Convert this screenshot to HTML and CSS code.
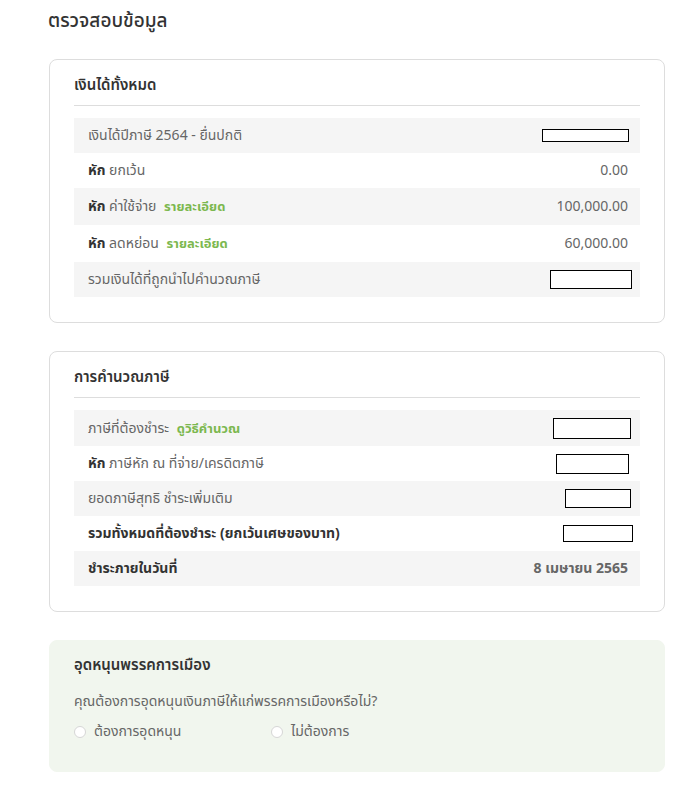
FILE: index.html
```html
<!DOCTYPE html>
<html lang="th">
<head>
<meta charset="utf-8">
<link rel="stylesheet" href="styles.css">
</head>
<body>
<div class="page">
  <h1 class="title">ตรวจสอบข้อมูล</h1>

  <section class="card">
    <h2 class="card-title">เงินได้ทั้งหมด</h2>
    <div class="rows">
      <div class="row grey"><span class="label">เงินได้ปีภาษี 2564 - ยื่นปกติ</span><span class="mask m1"></span></div>
      <div class="row"><span class="label"><b>หัก</b> ยกเว้น</span><span class="val">0.00</span></div>
      <div class="row grey tall"><span class="label"><b>หัก</b> ค่าใช้จ่าย <a class="link">รายละเอียด</a></span><span class="val">100,000.00</span></div>
      <div class="row tall"><span class="label"><b>หัก</b> ลดหย่อน <a class="link">รายละเอียด</a></span><span class="val">60,000.00</span></div>
      <div class="row grey"><span class="label">รวมเงินได้ที่ถูกนำไปคำนวณภาษี</span><span class="mask m2"></span></div>
    </div>
  </section>

  <section class="card">
    <h2 class="card-title">การคำนวณภาษี</h2>
    <div class="rows">
      <div class="row grey mid"><span class="label">ภาษีที่ต้องชำระ <a class="link">ดูวิธีคำนวณ</a></span><span class="mask m3"></span></div>
      <div class="row"><span class="label"><b>หัก</b> ภาษีหัก ณ ที่จ่าย/เครดิตภาษี</span><span class="mask m4"></span></div>
      <div class="row grey"><span class="label">ยอดภาษีสุทธิ ชำระเพิ่มเติม</span><span class="mask m5"></span></div>
      <div class="row"><span class="label strong">รวมทั้งหมดที่ต้องชำระ (ยกเว้นเศษของบาท)</span><span class="mask m6"></span></div>
      <div class="row grey"><span class="label strong">ชำระภายในวันที่</span><span class="val strong">8 เมษายน 2565</span></div>
    </div>
  </section>

  <section class="card green">
    <h2 class="card-title plain">อุดหนุนพรรคการเมือง</h2>
    <p class="question">คุณต้องการอุดหนุนเงินภาษีให้แก่พรรคการเมืองหรือไม่?</p>
    <div class="radios">
      <label class="radio"><span class="dot"></span>ต้องการอุดหนุน</label>
      <label class="radio"><span class="dot"></span>ไม่ต้องการ</label>
    </div>
  </section>
</div>
</body>
</html>
```

FILE: styles.css
```css
* { box-sizing: border-box; }
html, body { margin: 0; padding: 0; background: #fff; }
body {
  font-family: "Noto Sans Thai", "Noto Sans", "DejaVu Sans", sans-serif;
  color: #666;
  font-size: 14px;
}
.page {
  width: 616px;
  margin-left: 49px;
  padding-top: 8px;
}
.title {
  margin: 0 0 0 -1px;
  font-family: "Noto Sans Thai", "Noto Sans", sans-serif;
  font-weight: 500;
  font-size: 19px;
  line-height: 28px;
  color: #333;
  height: 51px;
}
.card {
  border: 1px solid #ddd;
  border-radius: 8px;
  padding: 14px 24px 25px 24px;
  margin-bottom: 28px;
}
.card-title {
  margin: 0;
  font-size: 15px;
  font-weight: 600;
  color: #333;
  line-height: 24px;
  padding-bottom: 7px;
  border-bottom: 1px solid #ddd;
}
.rows { margin-top: 12px; }
.row {
  display: flex;
  justify-content: space-between;
  align-items: center;
  height: 35px;
  padding: 0 12px 0 14px;
}
.row.tall { height: 37px; }
.row.mid { height: 36px; }
.row.grey { background: #f5f5f5; }
.label { font-size: 14px; color: #666; }
.label b, .strong { font-weight: 700; color: #333; }
.val { font-size: 14px; color: #666; }
.link {
  color: #7cb84f;
  font-weight: 700;
  font-size: 13px;
  margin-left: 4px;
}
.mask {
  display: block;
  border: 1px solid #000;
  background: #fff;
}
.m1 { width: 87px; height: 13px; margin-right: -1px; }
.m2 { width: 82px; height: 19px; margin-right: -4px; }
.m3 { width: 78px; height: 21px; margin-right: -3px; }
.m4 { width: 73px; height: 20px; margin-right: -1px; }
.m5 { width: 66px; height: 19px; margin-right: -3px; }
.m6 { width: 70px; height: 17px; margin-right: -5px; }
.card.green {
  background: #f1f6ee;
  border-color: #f1f6ee;
  padding: 13px 24px 28px 24px;
}
.card-title.plain { border-bottom: none; padding-bottom: 0; }
.question { margin: 13px 0 8px; line-height: 22px; }
.radios { display: flex; }
.radio {
  display: flex;
  align-items: center;
  width: 197px;
  line-height: 22px;
}
.dot {
  width: 12px;
  height: 12px;
  border-radius: 50%;
  border: 1px solid #d6d6d6;
  background: #fff;
  margin-right: 8px;
}
```
